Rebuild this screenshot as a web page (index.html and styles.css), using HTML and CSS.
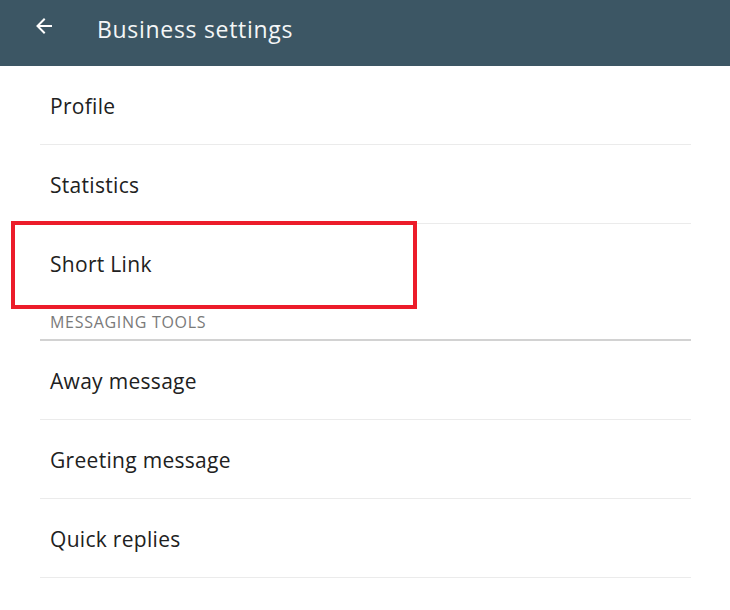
FILE: index.html
```html
<!DOCTYPE html>
<html lang="en">
<head>
<meta charset="utf-8">
<title>Business settings</title>
<link rel="stylesheet" href="styles.css">
</head>
<body>
<header class="appbar">
  <button class="back" aria-label="Back">
    <svg width="18" height="18" viewBox="0 0 18 18" fill="none" stroke="#ffffff" stroke-width="2" stroke-linecap="square">
      <path d="M16 9H3"/>
      <path d="M9 2.5L2.5 9L9 15.5"/>
    </svg>
  </button>
  <h1 class="title">Business settings</h1>
</header>

<main class="settings">
  <div class="item">Profile</div>
  <div class="item">Statistics</div>
  <div class="item item-last item-marked">
    Short Link
    <span class="mark"></span>
  </div>
  <div class="section">MESSAGING TOOLS</div>
  <div class="item">Away message</div>
  <div class="item">Greeting message</div>
  <div class="item">Quick replies</div>
</main>
</body>
</html>
```

FILE: styles.css
```css
* {
  box-sizing: border-box;
}

html, body {
  margin: 0;
  background: #ffffff;
}

body {
  font-family: "Open Sans", Roboto, sans-serif;
  color: #212121;
  width: 730px;
  height: 610px;
  overflow: hidden;
}

.appbar {
  height: 66px;
  background: #3c5664;
  display: flex;
  align-items: center;
  padding-left: 35px;
  padding-bottom: 8px;
}

.back {
  background: none;
  border: 0;
  padding: 0;
  width: 18px;
  height: 18px;
  display: flex;
  margin-top: -6px;
}

.title {
  margin: 0 0 0 44px;
  font-size: 23px;
  font-weight: 400;
  letter-spacing: 0.7px;
  color: #f4f6f7;
}

.settings {
  margin: 0 39px 0 40px;
}

.item {
  height: 79px;
  padding-left: 10px;
  display: flex;
  align-items: center;
  font-size: 21px;
  letter-spacing: 0.3px;
  border-bottom: 1px solid #ebebeb;
  padding-top: 1px;
}

.item-last {
  border-bottom: 0;
  height: 78px;
}

.item-marked {
  position: relative;
}

.mark {
  position: absolute;
  left: -29px;
  top: -3px;
  width: 406px;
  height: 88px;
  border: 4px solid #ec1c2a;
}

.section {
  height: 39px;
  padding-left: 10px;
  padding-top: 9px;
  font-size: 16px;
  letter-spacing: 0.7px;
  color: #7a7a7a;
  border-bottom: 2px solid #d2d2d2;
}
```
